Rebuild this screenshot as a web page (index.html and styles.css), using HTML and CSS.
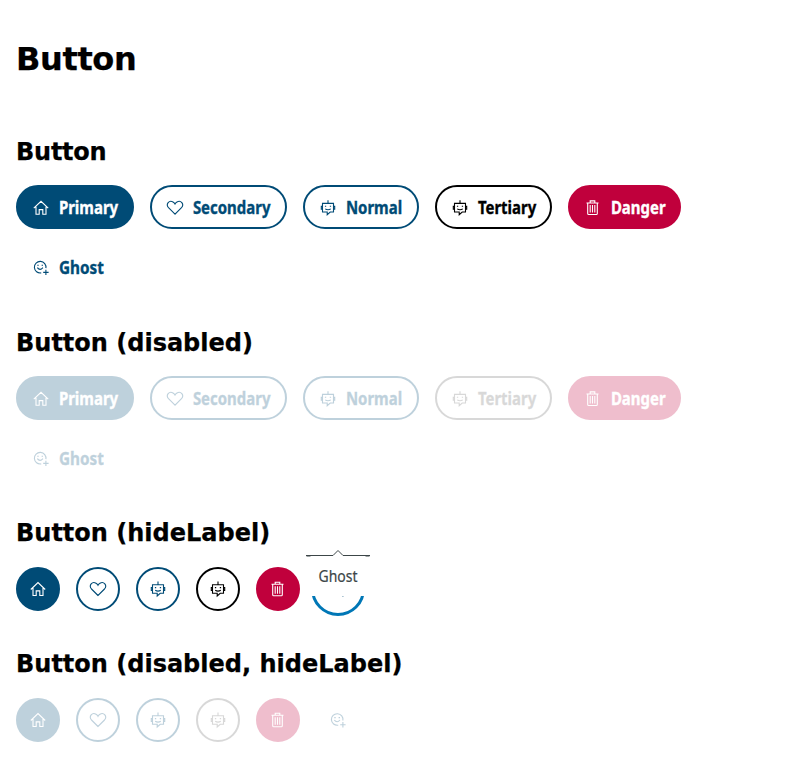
FILE: index.html
```
<!DOCTYPE html>
<html lang="en">
<head>
<meta charset="utf-8">
<title>Button</title>
<link rel="stylesheet" href="styles.css">
</head>
<body>
<svg class="sprite" aria-hidden="true">
  <symbol id="home" viewBox="0 0 18 18"><path d="M1.800 9.500 9 2.600l7.200 6.900M4 8v7.500h3.200v-4.600h3.600v4.600H14V8"/></symbol>
  <symbol id="heart" viewBox="0 0 18 18"><path d="M9 15.500 2.500 9C-.6 5.500 3.200 1 7 3.200Q8.400 4 9 5.200 9.600 4 11 3.200c3.800-2.200 7.600 2.300 4.500 5.800z"/></symbol>
  <symbol id="bot" viewBox="0 0 18 18"><path d="M9 4.800V1.500M3.500 4.700h11v8.600h-3.300l-3 2.700v-2.700H3.500zM3.500 7.500H2.300v3h1.200M14.500 7.500h1.200v3h-1.200M5.900 7.600h1.300M10.800 7.600h1.300M6.200 10.200q2.800 1.800 5.600 0"/></symbol>
  <symbol id="trash" viewBox="0 0 18 18"><path d="M2.500 4.300h12M6.200 4.200V2.200h4.600v2M3.700 4.500v10.200q0 1.100 1 1.100h7.600q1 0 1-1.100V4.500M6.200 6.300v7.500M8.500 6.300v7.500M10.800 6.300v7.500"/></symbol>
  <symbol id="smile" viewBox="0 0 18 18"><path d="M9.200 14.200A5.800 5.800 0 1 1 13.900 9.500M5.300 9q2.700 3.400 5.600 0M5.300 6.600h1.400M9.600 6.600h1.400M13.900 11v5.400M11.200 13.700h5.400"/></symbol>
</svg>
<main>
  <h1>Button</h1>
  <section>
    <h2 class="short">Button</h2>
    <div class="row">
      <button class="btn primary"><svg><use href="#home"/></svg><span class="label">Primary</span></button>
      <button class="btn secondary"><svg><use href="#heart"/></svg><span class="label">Secondary</span></button>
      <button class="btn normal"><svg><use href="#bot"/></svg><span class="label">Normal</span></button>
      <button class="btn tertiary"><svg><use href="#bot"/></svg><span class="label">Tertiary</span></button>
      <button class="btn danger"><svg><use href="#trash"/></svg><span class="label">Danger</span></button>
      <button class="btn ghost"><svg><use href="#smile"/></svg><span class="label">Ghost</span></button>
    </div>
  </section>
  <section>
    <h2>Button (disabled)</h2>
    <div class="row">
      <button class="btn primary" disabled><svg><use href="#home"/></svg><span class="label">Primary</span></button>
      <button class="btn secondary" disabled><svg><use href="#heart"/></svg><span class="label">Secondary</span></button>
      <button class="btn normal" disabled><svg><use href="#bot"/></svg><span class="label">Normal</span></button>
      <button class="btn tertiary" disabled><svg><use href="#bot"/></svg><span class="label">Tertiary</span></button>
      <button class="btn danger" disabled><svg><use href="#trash"/></svg><span class="label">Danger</span></button>
      <button class="btn ghost" disabled><svg><use href="#smile"/></svg><span class="label">Ghost</span></button>
    </div>
  </section>
  <section>
    <h2>Button (hideLabel)</h2>
    <div class="row">
      <button class="btn round primary"><svg><use href="#home"/></svg></button>
      <button class="btn round secondary"><svg><use href="#heart"/></svg></button>
      <button class="btn round normal"><svg><use href="#bot"/></svg></button>
      <button class="btn round tertiary"><svg><use href="#bot"/></svg></button>
      <button class="btn round danger"><svg><use href="#trash"/></svg></button>
      <div class="tip-host">
        <button class="btn round ghost focused"><svg><use href="#smile"/></svg></button>
        <div class="tooltip" role="tooltip">
          <svg class="tip-edge" viewBox="0 0 64 8"><path d="M0 6.500h27l5-5 5 5h27M.5 7h4M59.500 7h4"/></svg>
          <span>Ghost</span>
        </div>
      </div>
    </div>
  </section>
  <section>
    <h2>Button (disabled, hideLabel)</h2>
    <div class="row">
      <button class="btn round primary" disabled><svg><use href="#home"/></svg></button>
      <button class="btn round secondary" disabled><svg><use href="#heart"/></svg></button>
      <button class="btn round normal" disabled><svg><use href="#bot"/></svg></button>
      <button class="btn round tertiary" disabled><svg><use href="#bot"/></svg></button>
      <button class="btn round danger" disabled><svg><use href="#trash"/></svg></button>
      <button class="btn round ghost" disabled><svg><use href="#smile"/></svg></button>
    </div>
  </section>
</main>
</body>
</html>
```
FILE: styles.css
```
* { box-sizing: border-box; }
body { margin: 0; background: #fff; color: #000; }
main { padding: 40px 16px 16px; }
.sprite { display: none; }
h1, h2 { margin: 0; font-family: Verdana, "DejaVu Sans", sans-serif; font-weight: 700; -webkit-text-stroke: .25px; }
h1 { font-size: 32px; line-height: 38px; margin-bottom: 60px; letter-spacing: -.35px; }
h2 { font-size: 24px; line-height: 28px; margin-bottom: 19px; }
.short { letter-spacing: -.25px; }
section { height: 191px; }
section:nth-of-type(2) { height: 190px; }
section:nth-of-type(3) { height: 131px; }
section:nth-of-type(4) { height: auto; }
section:nth-of-type(n+3) h2 { margin-bottom: 20px; }
.row { display: flex; flex-wrap: wrap; gap: 16px; width: 680px; }
.btn {
  display: flex; align-items: center; gap: 8px;
  height: 44px; padding: 0 14px;
  border: 2px solid #004b76; border-radius: 22px;
  background: #fff; color: #004b76;
  font: 700 17px "Noto Sans", sans-serif;
}
.btn svg { flex: none; width: 18px; height: 18px; fill: none; stroke: currentColor; stroke-width: 1.100; }
.btn:not(.round) svg { transform: translateY(.7px); }
.label { white-space: nowrap; transform: translateY(1px) scaleX(.88); transform-origin: left; padding-left: 1px; line-height: 24px; -webkit-text-stroke: .35px; }
.primary { width: 118px; background: #004b76; color: #fff; }
.secondary { width: 137px; }
.normal { width: 116px; }
.tertiary { width: 117px; border-color: #000; color: #000; }
.danger { width: 113px; background: #c0003c; border-color: #c0003c; color: #fff; }
.ghost { width: 104px; border-color: transparent; background: transparent; }
.ghost .label { transform: translateY(1px) scaleX(.9); }
.btn:disabled { opacity: .25; }
.tertiary:disabled { opacity: .15; }
.round { width: 44px; padding: 0; justify-content: center; }
.tip-host { position: relative; }
.focused { outline: 3px solid #0077b6; outline-offset: 2px; }
.tooltip {
  position: absolute; left: -10px; top: -18px;
  width: 64px; height: 47px; background: #fff; color: #3c4648;
  font: 400 15.500px/20px "Noto Sans", sans-serif; text-align: center;
}
.tip-edge { display: block; width: 64px; height: 8px; fill: none; stroke: #3c4648; }
.tooltip span { display: block; margin-top: 9px; transform: scaleX(.9); -webkit-text-stroke: .2px; }
```
